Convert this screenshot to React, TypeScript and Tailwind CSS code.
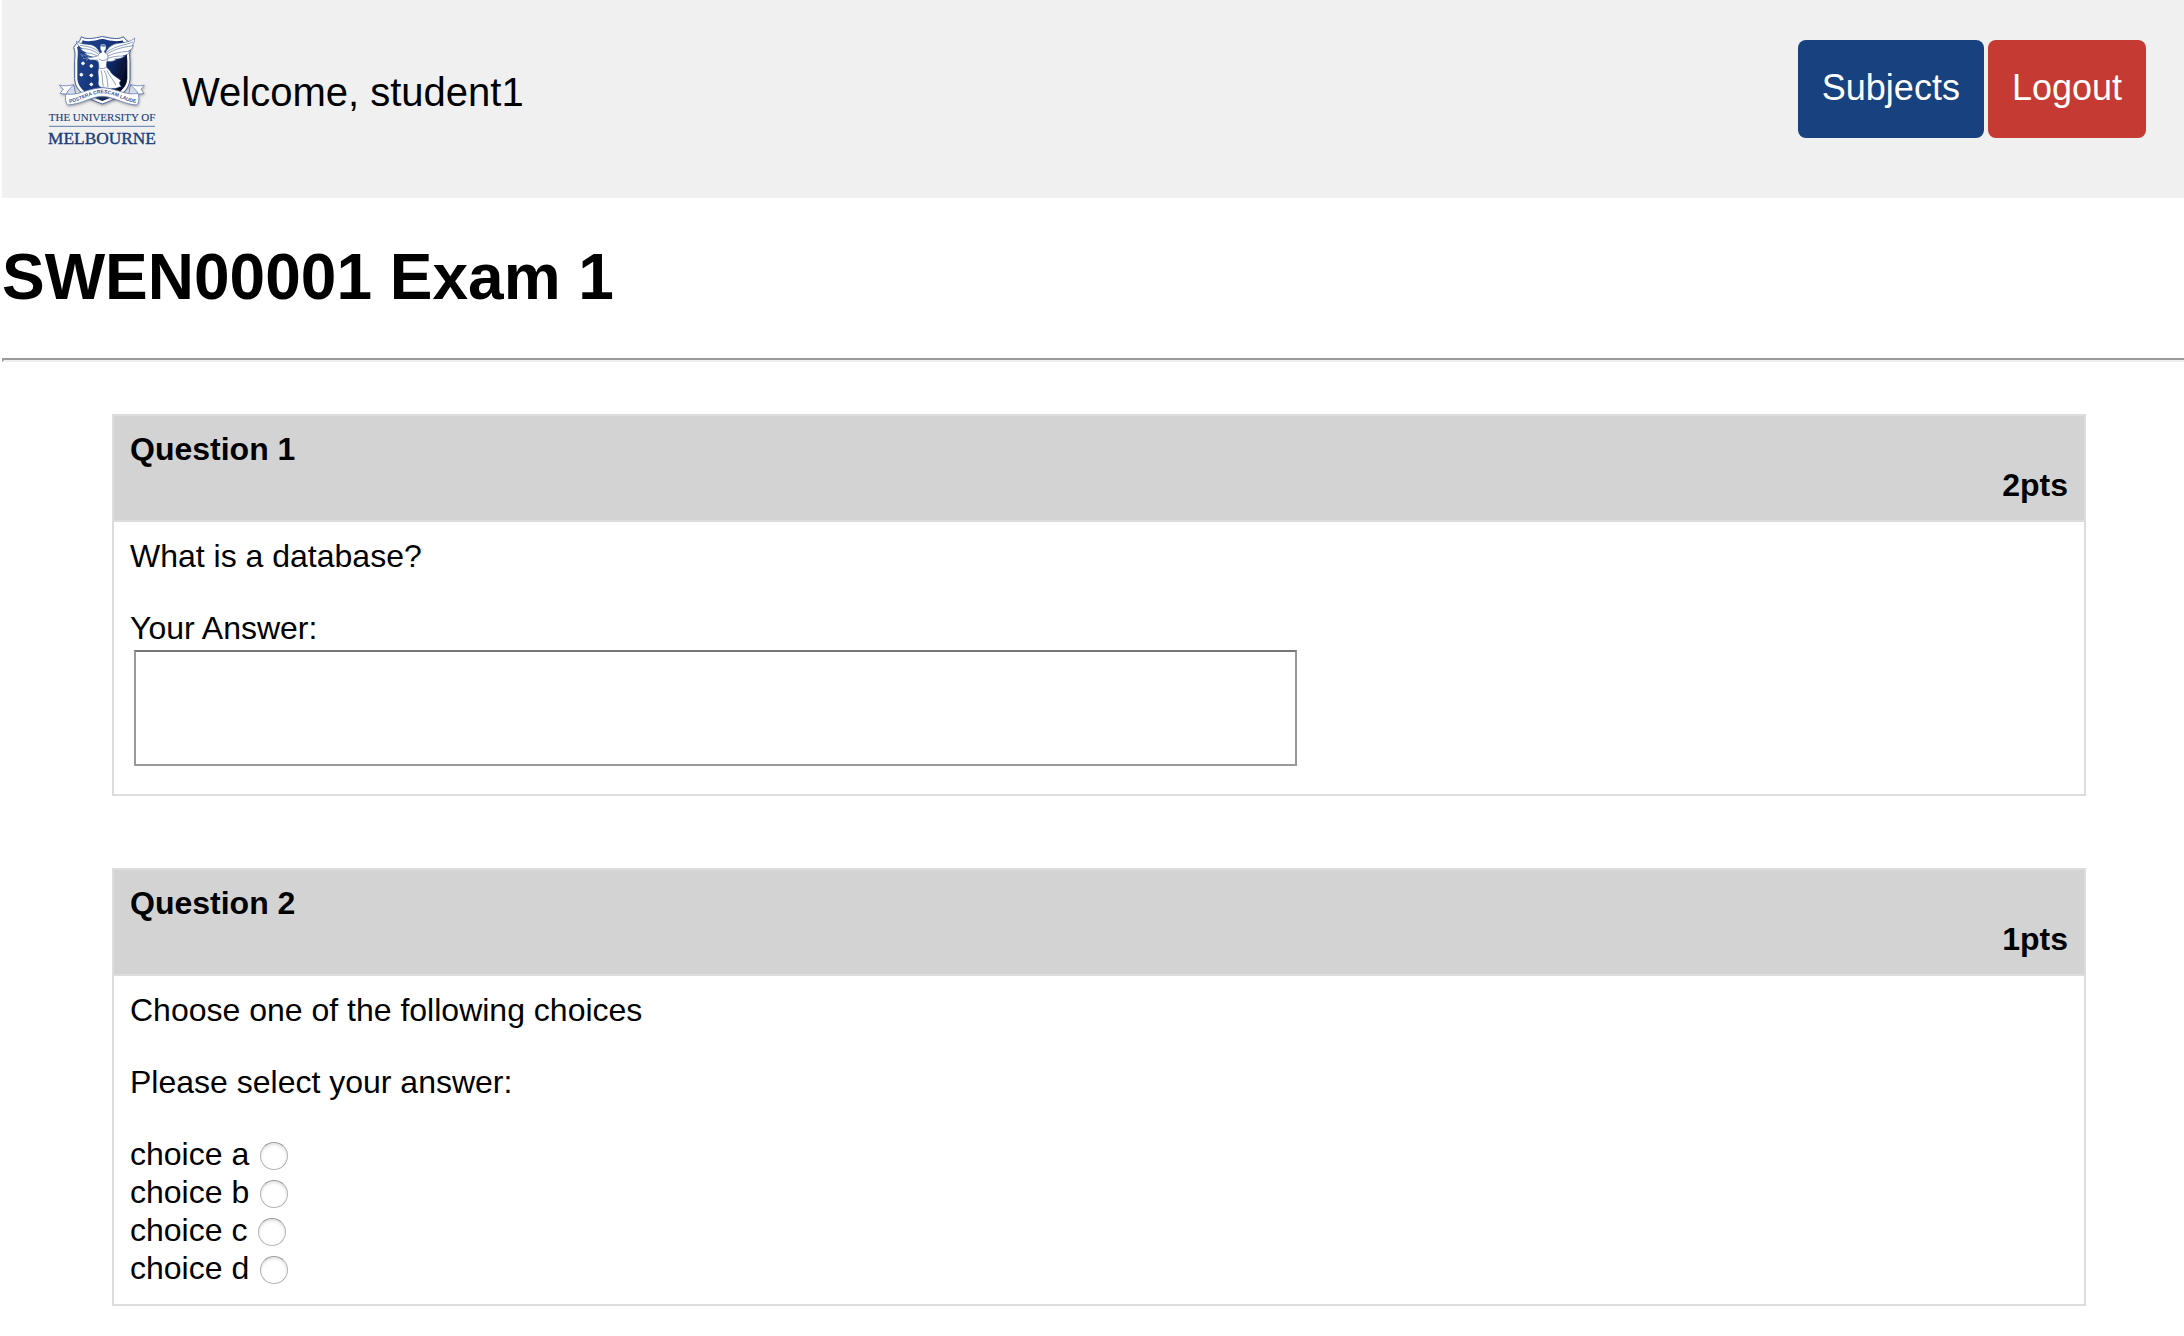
import { useId, type ReactNode } from "react";

const NAVY = "#1b3f7c";

function Star({ x, y }: { x: number; y: number }) {
  return (
    <g fill="#fff">
      <circle cx={x} cy={y} r={5} />
      <path d={`M${x - 6} ${y}h12M${x} ${y - 6}v12`} stroke="#e4e9f4" strokeWidth={2} />
    </g>
  );
}

function UniversityLogo() {
  return (
    <svg
      viewBox="48 36 330 360"
      className="h-[120px] w-[110px] shrink-0"
      role="img"
      aria-label="The University of Melbourne"
    >
      <defs>
        <linearGradient id="field" x1="0" y1="0" x2="1" y2="0.5">
          <stop offset="0" stopColor="#24488f" />
          <stop offset="0.6" stopColor="#14337a" />
          <stop offset="1" stopColor="#060d26" />
        </linearGradient>
        <filter id="shade" x="-20%" y="-20%" width="140%" height="140%">
          <feDropShadow dx="2" dy="4" stdDeviation="3" floodColor="#555" floodOpacity="0.5" />
        </filter>
        <path id="motto" d="M118 249 C158 242 178 221 217 220 C256 221 276 242 318 249" />
      </defs>

      {/* shield */}
      <g filter="url(#shade)">
        <path
          d="M154 50 C164 58 184 56 200 53 Q217 46 234 53 C250 56 270 58 280 50 C285 58 292 64 302 68 L304 80 C297 92 299 106 300 122 V176 C299 214 262 236 217 252 C172 236 135 214 134 176 V122 C135 106 137 96 131 82 L140 70 C148 66 152 58 154 50Z"
          fill="#fff"
          stroke="#405f9c"
          strokeWidth="3"
        />
        <path
          d="M158 61 C170 66 188 63 202 60 Q217 54 232 60 C246 63 266 66 277 61 C280 68 286 72 293 76 C289 92 291 108 292 122 V176 C290 207 258 228 217 243 C176 228 144 207 142 176 V122 C143 108 145 94 141 82 C149 76 156 70 158 61Z"
          fill="url(#field)"
        />
      </g>

      <Star x={159} y={130} />
      <Star x={184} y={138} />
      <Star x={154} y={164} />
      <Star x={184} y={166} />
      <Star x={184} y={193} />

      {/* wreath in the outstretched hand */}
      <path
        d="M154 108 q6 -8 12 0 q7 -4 12 4 M158 116 q8 -4 14 2 M168 122 l10 -8 M152 102 l8 10"
        fill="none"
        stroke="#8fa3cd"
        strokeWidth="2"
      />

      {/* wings */}
      <g fill="#fff" stroke="#2a4b8f" strokeWidth="1.6" strokeLinejoin="round">
        <path d="M207 126 C198 122 188 117 181 111 L187 111 C176 108 168 104 163 99 L170 99 C160 95 153 90 150 85 L157 86 C148 81 141 74 139 64 C150 72 166 73 182 74 C196 77 206 87 211 102Z" />
        <path d="M228 124 C238 126 250 124 260 119 L254 117 C266 118 277 114 285 108 L279 108 C289 106 297 100 301 94 L295 94 C304 89 309 82 310 76 L305 78 C311 72 314 64 314 54 C302 66 282 68 264 70 C244 74 232 84 226 100Z" />
      </g>
      <g fill="none" stroke="#5470a8" strokeWidth="2">
        <path d="M157 86 C176 86 194 92 207 104 M170 99 C184 99 196 104 207 112 M150 76 C170 79 192 81 208 98 M187 111 C194 112 201 115 207 119" />
        <path d="M305 78 C276 82 250 88 229 104 M295 94 C270 96 250 99 229 111 M279 108 C260 108 246 110 229 117 M309 66 C286 76 256 76 229 98" />
      </g>

      {/* figure */}
      <g stroke="#2a4b8f" strokeWidth="1.6" strokeLinejoin="round" fill="#fff">
        <path d="M211 78 C212 70 226 70 228 78 C229 85 227 92 223 93 L225 98 C234 102 236 110 232 120 C230 128 228 134 230 142 L240 152 C244 164 262 172 273 182 C268 186 266 190 274 200 C264 200 258 208 249 205 C242 210 230 204 221 204 C212 202 203 200 205 186 C208 172 201 160 206 144 C208 133 204 128 203 120 L181 120 L168 112 L186 112 L203 108 C206 102 210 98 215 97 L214 93 C210 89 210 84 211 78Z" />
        <path
          d="M206 143 C214 148 222 146 230 141 M213 151 C219 168 216 184 220 200 M222 151 C232 168 232 184 234 202 M231 152 C240 170 250 180 258 196 M206 116 C214 123 224 123 231 116"
          fill="none"
        />
      </g>
      <path d="M211 78 C215 70 226 71 228 79 L221 81Z" fill="#6f86b8" />

      {/* ribbon */}
      <g filter="url(#shade)" fill="#fff" stroke="#5c76ad" strokeWidth="2.2" strokeLinejoin="round">
        <path d="M88 195 C102 200 118 197 131 194 L135 218 C122 222 106 224 90 220 L100 208Z" />
        <path d="M343 195 C329 200 315 197 302 194 L298 218 C311 222 327 224 342 220 L333 208Z" />
        <path d="M111 216 L131 194 L137 223 L111 232Z" fill="#d4dcec" />
        <path d="M322 216 L302 194 L296 223 L322 232Z" fill="#d4dcec" />
        <path d="M108 222 C104 236 108 250 113 255 C158 252 178 231 217 229 C256 231 276 252 320 255 C326 250 329 236 324 220 C286 228 262 205 217 203 C172 205 146 228 108 222Z" />
      </g>
      <text
        fontFamily="Liberation Sans, sans-serif"
        fontSize="15"
        fontWeight="700"
        fill="#34549a"
      >
        <textPath href="#motto" startOffset="50%" textAnchor="middle">
          POSTERA CRESCAM LAUDE
        </textPath>
      </text>

      <g fontFamily="Liberation Serif, serif" fill={NAVY} stroke={NAVY} textAnchor="middle">
        <text x="216" y="303" fontSize="33" strokeWidth="0.4">
          THE UNIVERSITY OF
        </text>
        <path d="M57 319H375" stroke="#5f7cab" strokeWidth="3" />
        <text x="216" y="373" fontSize="52" strokeWidth="1.2">
          MELBOURNE
        </text>
      </g>
    </svg>
  );
}

type QuestionProps = { title: string; points: string; children: ReactNode };

function QuestionCard({ title, points, children }: QuestionProps) {
  return (
    <section className="border-2 border-[#ddd]">
      <header className="border-b-2 border-[#ddd] bg-[#d3d3d3] px-4 pt-[15px] pb-[17px] font-bold">
        <h2>{title}</h2>
        <p className="text-right">{points}</p>
      </header>
      <div className="p-4">{children}</div>
    </section>
  );
}

function Choice({ label }: { label: string }) {
  const id = useId();
  return (
    <div className="flex h-[38px] items-start gap-[11px]">
      <label htmlFor={id}>{label}</label>
      <input
        id={id}
        type="radio"
        name="question-2"
        value={label}
        className="mt-1.5 size-7 appearance-none rounded-full border border-[#b4b4b4] border-t-[#9c9c9c] bg-white shadow-[inset_0_2px_3px_#e2e2e2] checked:border-8 checked:border-[#18427f]"
      />
    </div>
  );
}

export default function App() {
  return (
    <div className="min-h-screen bg-white pl-0.5 font-['Liberation_Sans',Arial,sans-serif] text-[32px] leading-9 text-black">
      <header className="flex items-center bg-[#f0f0f0] pt-8 pr-[38px] pb-[46px] pl-11">
        <UniversityLogo />
        <p className="ml-[26px] text-[40px] leading-[46px]">Welcome, student1</p>
        <nav className="mt-2 ml-auto flex gap-1 self-start text-4xl text-white">
          <button type="button" className="rounded-lg bg-[#18427f] px-6 pt-7 pb-[30px] leading-10">
            Subjects
          </button>
          <button type="button" className="rounded-lg bg-[#c63a34] px-6 pt-7 pb-[30px] leading-10">
            Logout
          </button>
        </nav>
      </header>

      <h1 className="mt-[43px] mb-[45px] text-[64px] leading-[72px] font-bold">SWEN00001 Exam 1</h1>
      <hr className="border-t-2 border-b-2 border-l-2 border-t-[#9a9a9a] border-b-[#eee] border-l-[#9a9a9a]" />

      <main className="mt-[52px] mr-[98px] mb-[30px] ml-[110px] flex flex-col gap-[72px]">
        <QuestionCard title="Question 1" points="2pts">
          <p>What is a database?</p>
          <label htmlFor="answer-1" className="mt-9 block">
            Your Answer:
          </label>
          <textarea
            id="answer-1"
            className="m-1 mb-3 block h-[116px] w-3/5 resize-none border-2 border-[#999] border-t-[#767676] bg-white p-1"
          />
        </QuestionCard>

        <QuestionCard title="Question 2" points="1pts">
          <p>Choose one of the following choices</p>
          <fieldset className="mt-9">
            <legend className="mb-9">Please select your answer:</legend>
            <Choice label="choice a" />
            <Choice label="choice b" />
            <Choice label="choice c" />
            <Choice label="choice d" />
          </fieldset>
        </QuestionCard>
      </main>
    </div>
  );
}
